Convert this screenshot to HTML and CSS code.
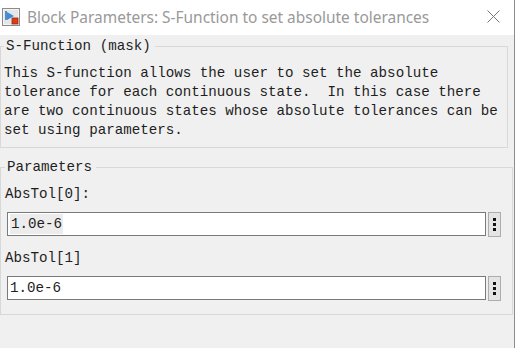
FILE: index.html
```html
<!DOCTYPE html>
<html lang="en">
<head>
  <meta charset="UTF-8">
  <title>Block Parameters: S-Function to set absolute tolerances</title>
  <link rel="stylesheet" href="styles.css">
</head>
<body>
  <div class="window">
    <div class="titlebar">
      <svg class="app-icon" width="18" height="18" viewBox="0 0 18 18">
        <rect x="0.5" y="0.5" width="17" height="17" fill="#f4f4f4" stroke="#8a8a8a"/>
        <rect x="2" y="2" width="14" height="14" fill="#e6e6e6"/>
        <line x1="4" y1="3" x2="4" y2="12" stroke="#2d6fb4" stroke-width="1.5"/>
        <polygon points="5,4 12,8 5,12" fill="#3a8fd8"/>
        <rect x="10" y="10" width="6" height="6" fill="#d9401a" stroke="#9c2a0c" stroke-width="0.8"/>
      </svg>
      <span class="title">Block Parameters: S-Function to set absolute tolerances</span>
      <svg class="close" width="13" height="13" viewBox="0 0 13 13">
        <path d="M0.5 0.5 L12.5 12.5 M12.5 0.5 L0.5 12.5" stroke="#777" stroke-width="1"/>
      </svg>
    </div>

    <div class="content">
      <fieldset class="group mask">
        <legend>S-Function (mask)</legend>
        <p class="desc">This S-function allows the user to set the absolute
tolerance for each continuous state.  In this case there
are two continuous states whose absolute tolerances can be
set using parameters.</p>
      </fieldset>

      <fieldset class="group params">
        <legend>Parameters</legend>
        <div class="param">
          <div class="param-label">AbsTol[0]:</div>
          <div class="param-row">
            <div class="edit"><span class="sel">1.0e-6</span></div>
            <div class="more"><i></i><i></i><i></i></div>
          </div>
        </div>
        <div class="param second">
          <div class="param-label">AbsTol[1]</div>
          <div class="param-row">
            <div class="edit">1.0e-6</div>
            <div class="more"><i></i><i></i><i></i></div>
          </div>
        </div>
      </fieldset>
    </div>
  </div>
</body>
</html>
```

FILE: styles.css
```css
html, body {
  margin: 0;
  padding: 0;
  height: 100%;
}
body {
  background: #f0f0f0;
  font-family: "Liberation Mono", "Noto Sans CJK SC", monospace;
  font-size: 14.2px;
  color: #1e1e1e;
}
.window {
  height: 348px;
  display: flex;
  flex-direction: column;
  border-right: 1px solid #8c8c8c;
  box-sizing: border-box;
}
.titlebar {
  height: 35px;
  flex: none;
  background: #fff;
  display: flex;
  align-items: center;
  padding-left: 2px;
}
.app-icon {
  margin-top: -2px;
}
.title {
  font-family: "Noto Sans", sans-serif;
  font-size: 15.45px;
  color: #999;
  margin-left: 7px;
  margin-top: -2px;
}
.close {
  margin-left: auto;
  margin-right: 14px;
  margin-top: -3px;
}
.content {
  flex: 1;
  background: #f0f0f0;
}
.group {
  margin: 2px 0 0 0;
  padding: 8px 3px 7px 3px;
  border: 1px solid #d8d8d8;
  min-width: 0;
}
.group legend {
  padding: 0 4px 0 2px;
  line-height: 19px;
}
.mask {
  width: 500px;
}
.params {
  margin-top: 10px;
  width: 505px;
  padding-top: 8px;
  padding-bottom: 13px;
}
.params legend {
  margin-left: 1px;
}
.desc {
  margin: 0;
  line-height: 19px;
  white-space: pre;
}
.param-label {
  line-height: 19px;
  margin-left: 1px;
}
.param-row {
  display: flex;
  align-items: stretch;
  gap: 2px;
  margin-top: 8px;
  margin-left: 3px;
}
.second .param-label {
  margin-top: 12px;
}
.second .param-row {
  margin-top: 8px;
}
.edit {
  width: 475px;
  height: 22px;
  border: 1px solid #7a7a7a;
  background: #fff;
  line-height: 22px;
  padding-left: 2px;
}
.sel {
  background: #ececec;
  padding: 2px 1px;
}
.more {
  width: 11px;
  height: 23px;
  border: 1px solid #adadad;
  background: #e4e4e4;
  display: flex;
  flex-direction: column;
  align-items: center;
  justify-content: center;
  gap: 2px;
}
.more i {
  display: block;
  width: 3px;
  height: 3px;
  background: #111;
}
```
